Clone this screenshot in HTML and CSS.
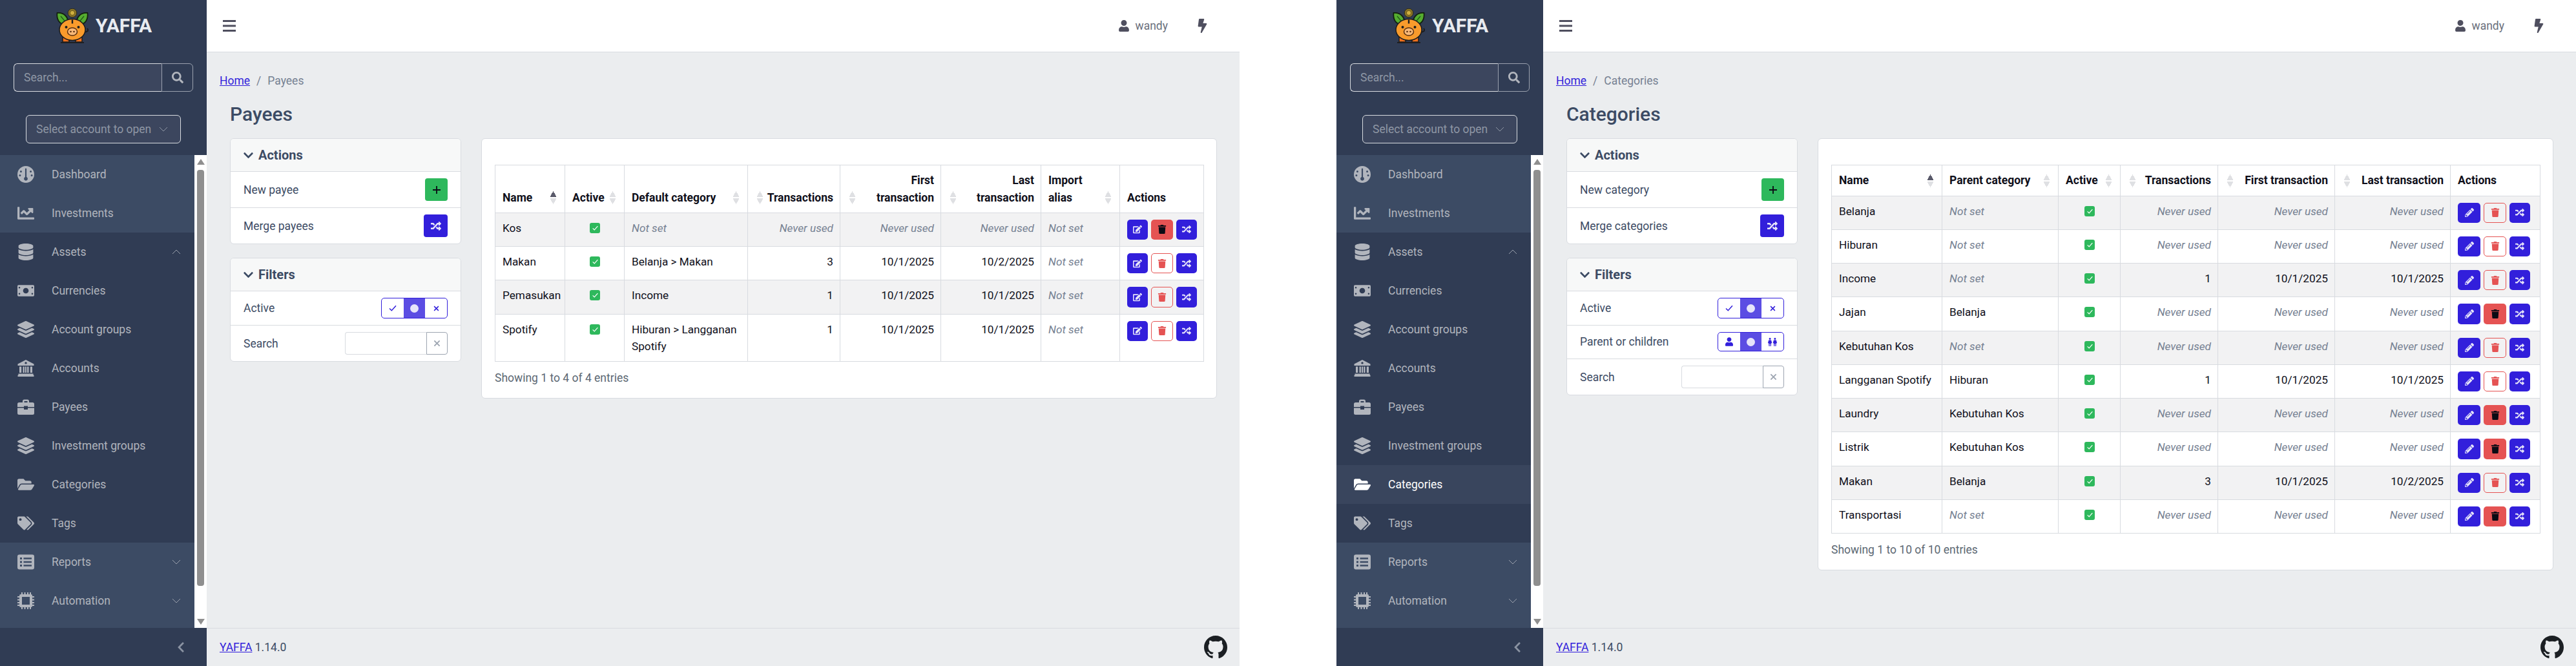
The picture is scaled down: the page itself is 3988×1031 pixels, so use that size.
FILE: index.html
```html
<!DOCTYPE html>
<html lang="en">
<head>
    <meta charset="UTF-8">
    <title>YAFFA</title>
    <link rel="stylesheet" href="styles.css">
</head>
<body>
    <svg class="sprite" xmlns="http://www.w3.org/2000/svg">
        <symbol id="i-gauge" viewBox="0 0 24 24"><path fill-rule="evenodd" d="M12 0a12 12 0 1 0 0 24 12 12 0 0 0 0-24zM5 6.5a1.4 1.4 0 1 0 0 2.8 1.4 1.4 0 0 0 0-2.8zM19 6.5a1.4 1.4 0 1 0 0 2.8 1.4 1.4 0 0 0 0-2.8zM3.6 12a1.4 1.4 0 1 0 0 2.8 1.4 1.4 0 0 0 0-2.8zM20.4 12a1.4 1.4 0 1 0 0 2.8 1.4 1.4 0 0 0 0-2.8zM11 3.5v12.2a2.7 2.7 0 1 0 2 0V3.5z"/></symbol>
        <symbol id="i-chart" viewBox="0 0 512 512"><path d="M496 384H64V80c0-8.84-7.16-16-16-16H16C7.16 64 0 71.16 0 80v336c0 17.67 14.33 32 32 32h464c8.84 0 16-7.16 16-16v-32c0-8.84-7.16-16-16-16zM464 96H345.94c-21.38 0-32.09 25.85-16.97 40.97l32.4 32.4L288 242.75l-73.37-73.37c-12.5-12.5-32.76-12.5-45.25 0l-68.69 68.69c-6.25 6.25-6.25 16.38 0 22.63l22.62 22.62c6.25 6.25 16.38 6.25 22.63 0L192 237.25l73.37 73.37c12.5 12.5 32.76 12.5 45.25 0l96-96 32.4 32.4c15.12 15.12 40.97 4.41 40.97-16.97V112c.01-8.84-7.15-16-16-16z"/></symbol>
        <symbol id="i-database" viewBox="0 0 448 512"><path d="M448 73.143v45.714C448 159.143 347.667 192 224 192S0 159.143 0 118.857V73.143C0 32.857 100.333 0 224 0s224 32.857 224 73.143zM448 176v102.857C448 319.143 347.667 352 224 352S0 319.143 0 278.857V176c48.125 33.143 136.208 48.572 224 48.572S399.874 209.143 448 176zm0 160v102.857C448 479.143 347.667 512 224 512S0 479.143 0 438.857V336c48.125 33.143 136.208 48.572 224 48.572S399.874 369.143 448 336z"/></symbol>
        <symbol id="i-money" viewBox="0 0 30 20"><path fill-rule="evenodd" d="M2 0h26a2 2 0 0 1 2 2v16a2 2 0 0 1-2 2H2a2 2 0 0 1-2-2V2a2 2 0 0 1 2-2zM15 5a5 5 0 1 0 0 10 5 5 0 0 0 0-10zM3.500 3a1 1 0 0 0 0 3 1 1 0 0 0 0-3zM26.500 3a1 1 0 0 0 0 3 1 1 0 0 0 0-3zM3.500 14a1 1 0 0 0 0 3 1 1 0 0 0 0-3zM26.500 14a1 1 0 0 0 0 3 1 1 0 0 0 0-3z"/></symbol>
        <symbol id="i-layers" viewBox="0 0 512 512"><path d="M12.410 148.020l232.940 105.670c6.800 3.090 14.490 3.090 21.290 0l232.940-105.670c16.550-7.510 16.550-32.520 0-40.030L266.650 2.310a25.607 25.607 0 0 0-21.290 0L12.410 107.980c-16.550 7.510-16.550 32.530 0 40.040zm487.180 88.280l-58.090-26.330-161.640 73.270c-7.560 3.430-15.590 5.170-23.860 5.170s-16.290-1.740-23.860-5.170L70.510 209.970l-58.100 26.330c-16.550 7.500-16.550 32.500 0 40l232.940 105.590c6.800 3.080 14.490 3.080 21.290 0L499.590 276.300c16.550-7.500 16.550-32.500 0-40zm0 127.800l-57.870-26.230-161.860 73.370c-7.560 3.430-15.590 5.170-23.860 5.170s-16.290-1.740-23.860-5.170L70.290 337.870 12.410 364.100c-16.550 7.500-16.550 32.500 0 40l232.940 105.590c6.800 3.080 14.490 3.080 21.290 0L499.590 404.100c16.550-7.500 16.550-32.500 0-40z"/></symbol>
        <symbol id="i-bank" viewBox="0 0 26 26"><path fill-rule="evenodd" d="M13 0l12.500 6.500V9H.5V6.500zM13 3.200a1.700 1.700 0 1 0 0 3.400 1.700 1.700 0 0 0 0-3.400zM3 10.500h3.200V20H3zM8.500 10.500h2.400V20H8.500zM12 10.500h2V20h-2zM15.100 10.500h2.400V20h-2.400zM19.800 10.500H23V20h-3.200zM1.500 21.500h23V23l1 1v2H.5v-2l1-1z"/></symbol>
        <symbol id="i-case" viewBox="0 0 26 24"><path fill-rule="evenodd" d="M8 5V3a2.500 2.500 0 0 1 2.500-2.500h5A2.500 2.500 0 0 1 18 3v2h5.500A2.500 2.500 0 0 1 26 7.500V12H16v-1.500h-6V12H0V7.500A2.500 2.500 0 0 1 2.500 5zM10.500 3v2h5V3zM0 13.500h10V16h6v-2.500h10v8A2.500 2.500 0 0 1 23.500 24h-21A2.500 2.500 0 0 1 0 21.500z"/></symbol>
        <symbol id="i-folder" viewBox="0 0 576 512"><path d="M572.694 292.093L500.27 416.248A63.997 63.997 0 0 1 444.989 448H45.025c-18.523 0-30.064-20.093-20.731-36.093l72.424-124.155A64 64 0 0 1 152 256h399.964c18.523 0 30.064 20.093 20.73 36.093zM152 224h328v-48c0-26.51-21.49-48-48-48H272l-64-64H48C21.49 64 0 85.49 0 112v278.046l69.077-118.418C86.214 242.25 117.989 224 152 224z"/></symbol>
        <symbol id="i-tags" viewBox="0 0 640 512"><path d="M497.941 225.941L286.059 14.059A48 48 0 0 0 252.118 0H48C21.490 0 0 21.490 0 48v204.118a48 48 0 0 0 14.059 33.941l211.882 211.882c18.744 18.745 49.136 18.746 67.882 0l204.118-204.118c18.745-18.745 18.745-49.137 0-67.882zM112 160c-26.510 0-48-21.490-48-48s21.490-48 48-48 48 21.490 48 48-21.490 48-48 48zm513.941 133.823L421.823 497.941c-18.745 18.745-49.137 18.745-67.882 0l-.36-.36L527.640 323.522c16.999-16.999 26.360-39.600 26.360-63.640s-9.362-46.641-26.360-63.640L331.397 0h48.721a48 48 0 0 1 33.941 14.059l211.882 211.882c18.745 18.745 18.745 49.137 0 67.882z"/></symbol>
        <symbol id="i-list" viewBox="0 0 26 23"><path fill-rule="evenodd" d="M3 0h20a3 3 0 0 1 3 3v17a3 3 0 0 1-3 3H3a3 3 0 0 1-3-3V3a3 3 0 0 1 3-3zM4 4.500v3h3v-3zM9.500 4.800v2.400H22V4.800zM4 10v3h3v-3zM9.500 10.300v2.400H22v-2.400zM4 15.500v3h3v-3zM9.500 15.800v2.400H22v-2.400z"/></symbol>
        <symbol id="i-chip" viewBox="0 0 26 26"><path fill-rule="evenodd" d="M5 3h16a2 2 0 0 1 2 2v16a2 2 0 0 1-2 2H5a2 2 0 0 1-2-2V5a2 2 0 0 1 2-2zM7 7v12h12V7zM6 0h2v3H6zM10.500 0h2v3h-2zM15 0h2v3h-2zM19 0h2v3h-2zM6 23h2v3H6zM10.500 23h2v3h-2zM15 23h2v3h-2zM19 23h2v3h-2zM0 6h3v2H0zM0 10.500h3v2H0zM0 15h3v2H0zM0 19h3v2H0zM23 6h3v2h-3zM23 10.500h3v2h-3zM23 15h3v2h-3zM23 19h3v2h-3z"/></symbol>
        <symbol id="i-search" viewBox="0 0 512 512"><path d="M505 442.700L405.300 343c-4.500-4.500-10.600-7-17-7H372c27.600-35.300 44-79.700 44-128C416 93.100 322.900 0 208 0S0 93.100 0 208s93.100 208 208 208c48.300 0 92.700-16.400 128-44v16.300c0 6.400 2.500 12.500 7 17l99.700 99.700c9.400 9.400 24.600 9.400 33.900 0l28.300-28.300c9.400-9.400 9.400-24.600.1-34zM208 336c-70.700 0-128-57.200-128-128 0-70.700 57.200-128 128-128 70.700 0 128 57.200 128 128 0 70.700-57.200 128-128 128z"/></symbol>
        <symbol id="i-user" viewBox="0 0 448 512"><path d="M224 256c70.700 0 128-57.300 128-128S294.700 0 224 0 96 57.300 96 128s57.300 128 128 128zm89.600 32h-16.700c-22.200 10.200-46.900 16-72.900 16s-50.600-5.800-72.900-16h-16.700C60.200 288 0 348.200 0 422.400V464c0 26.500 21.500 48 48 48h352c26.500 0 48-21.500 48-48v-41.600c0-74.200-60.200-134.400-134.400-134.400z"/></symbol>
        <symbol id="i-bolt" viewBox="0 0 320 512"><path d="M296 160H180.600l42.600-129.800C227.200 15 215.700 0 200 0H56C44 0 33.800 8.900 32.200 20.800l-32 240C-1.700 275.200 9.500 288 24 288h118.700L96.600 482.500c-3.600 15.200 8 29.500 23.300 29.500 8.400 0 16.400-4.400 20.800-12l176-304c9.300-15.900-2.200-36-20.700-36z"/></symbol>
        <symbol id="i-bars" viewBox="0 0 20 18"><path d="M0 0h20v3H0zM0 7.500h20v3H0zM0 15h20v3H0z"/></symbol>
        <symbol id="i-back" viewBox="0 0 320 512"><path d="M34.520 239.030L228.870 44.690c9.370-9.370 24.570-9.370 33.940 0l22.670 22.670c9.360 9.360 9.370 24.520.04 33.900L131.490 256l154.020 154.750c9.340 9.380 9.320 24.540-.04 33.900l-22.670 22.670c-9.370 9.370-24.570 9.370-33.940 0L34.520 272.970c-9.370-9.370-9.370-24.570 0-33.940z"/></symbol>
        <symbol id="i-down" viewBox="0 0 448 512"><path d="M207.029 381.476L12.686 187.132c-9.373-9.373-9.373-24.569 0-33.941l22.667-22.667c9.357-9.357 24.522-9.375 33.901-.04L224 284.505l154.745-154.021c9.379-9.335 24.544-9.317 33.901.04l22.667 22.667c9.373 9.373 9.373 24.569 0 33.941L240.971 381.476c-9.373 9.372-24.569 9.372-33.942 0z"/></symbol>
        <symbol id="i-thin-down" viewBox="0 0 14 8"><path d="M1 1l6 6 6-6" fill="none" stroke="currentColor" stroke-width="1"/></symbol>
        <symbol id="i-thin-up" viewBox="0 0 14 8"><path d="M1 7l6-6 6 6" fill="none" stroke="currentColor" stroke-width="1"/></symbol>
        <symbol id="i-plus" viewBox="0 0 12 12"><path d="M5.100 0h1.800v5.100H12v1.800H6.900V12H5.100V6.900H0V5.100h5.100z"/></symbol>
        <symbol id="i-shuffle" viewBox="0 0 512 512"><path d="M504.971 359.029c9.373 9.373 9.373 24.569 0 33.941l-80 79.984c-15.010 15.010-40.971 4.490-40.971-16.971V416h-58.785a12.004 12.004 0 0 1-8.773-3.812l-70.556-75.596 53.333-57.143L352 336h32v-39.981c0-21.438 25.943-31.998 40.971-16.971l80 79.981zM12 176h84l52.781 56.551 53.333-57.143-70.556-75.596A11.999 11.999 0 0 0 122.785 96H12c-6.627 0-12 5.373-12 12v56c0 6.627 5.373 12 12 12zm372 0v39.984c0 21.460 25.961 31.980 40.971 16.971l80-79.984c9.373-9.373 9.373-24.569 0-33.941l-80-79.981C409.943 24.021 384 34.582 384 56.019V96h-58.785a12.004 12.004 0 0 0-8.773 3.812L96 336H12c-6.627 0-12 5.373-12 12v56c0 6.627 5.373 12 12 12h110.785c3.326 0 6.503-1.381 8.773-3.812L352 176h32z"/></symbol>
        <symbol id="i-edit" viewBox="0 0 576 512"><path d="M402.600 83.200l90.200 90.200c3.800 3.800 3.800 10 0 13.800L274.400 405.600l-92.800 10.300c-12.400 1.400-22.900-9.100-21.500-21.500l10.300-92.800L388.800 83.200c3.800-3.800 10-3.800 13.800 0zm162-22.900l-48.800-48.800c-15.200-15.200-39.900-15.200-55.200 0l-35.400 35.400c-3.800 3.800-3.800 10 0 13.800l90.200 90.200c3.800 3.800 10 3.800 13.800 0l35.400-35.400c15.200-15.300 15.200-40 0-55.200zM384 346.200V448H64V128h229.800c3.200 0 6.200-1.300 8.500-3.500l40-40c7.600-7.600 2.200-20.500-8.500-20.500H48C21.500 64 0 85.500 0 112v352c0 26.500 21.500 48 48 48h352c26.500 0 48-21.500 48-48V306.200c0-10.700-12.900-16-20.500-8.500l-40 40c-2.200 2.300-3.500 5.300-3.500 8.500z"/></symbol>
        <symbol id="i-pencil" viewBox="0 0 512 512"><path d="M497.900 142.100l-46.100 46.100c-4.700 4.700-12.300 4.700-17 0l-111-111c-4.700-4.700-4.700-12.300 0-17l46.100-46.100c18.700-18.700 49.100-18.700 67.900 0l60.100 60.100c18.800 18.700 18.800 49.100 0 67.900zM284.200 99.800L21.600 362.400.4 483.900c-2.900 16.400 11.400 30.600 27.800 27.800l121.500-21.300 262.600-262.600c4.700-4.700 4.700-12.300 0-17l-111-111c-4.800-4.700-12.400-4.700-17.100 0zM124.100 339.900c-5.500-5.500-5.500-14.300 0-19.800l154-154c5.500-5.500 14.300-5.500 19.800 0s5.500 14.300 0 19.800l-154 154c-5.500 5.500-14.300 5.500-19.800 0zM88 424h48v36.300l-64.500 11.300-31.100-31.100L51.700 376H88v48z"/></symbol>
        <symbol id="i-trash" viewBox="0 0 448 512"><path d="M432 32H312l-9.400-18.700A24 24 0 0 0 281.100 0H166.800a23.720 23.720 0 0 0-21.400 13.300L136 32H16A16 16 0 0 0 0 48v32a16 16 0 0 0 16 16h416a16 16 0 0 0 16-16V48a16 16 0 0 0-16-16zM53.200 467a48 48 0 0 0 47.900 45h245.800a48 48 0 0 0 47.900-45L416 128H32z"/></symbol>
        <symbol id="i-check" viewBox="0 0 14 12"><path d="M1 6.500l4 4 8-9" fill="none" stroke="currentColor" stroke-width="1.800"/></symbol>
        <symbol id="i-times" viewBox="0 0 12 12"><path d="M1.500 1.500l9 9M10.500 1.500l-9 9" fill="none" stroke="currentColor" stroke-width="2"/></symbol>
        <symbol id="i-kids" viewBox="0 0 24 20"><path d="M6 0a2.300 2.300 0 1 1 0 4.600A2.300 2.300 0 0 1 6 0zM18 0a2.300 2.300 0 1 1 0 4.600A2.300 2.300 0 0 1 18 0zM3 5.500h6l2 7H9l-.5 7.500H6.800v-6H5.200v6H3.500L3 12.500H1zM15 5.500h6l2 7h-2l-.5 7.500h-1.700v-6h-1.600v6h-1.700l-.5-7.500h-2z"/></symbol>
        <symbol id="i-github" viewBox="0 0 16 16"><path d="M8 0C3.580 0 0 3.580 0 8c0 3.540 2.290 6.530 5.470 7.590.4.070.55-.17.55-.38 0-.19-.01-.82-.01-1.490-2.010.37-2.530-.49-2.690-.94-.09-.23-.48-.94-.82-1.130-.28-.15-.68-.52-.01-.53.63-.01 1.080.58 1.230.82.72 1.210 1.870.87 2.330.66.070-.52.280-.87.510-1.070-1.780-.2-3.640-.89-3.640-3.950 0-.87.310-1.590.82-2.150-.08-.2-.36-1.020.08-2.120 0 0 .67-.21 2.200.82.640-.18 1.320-.27 2-.27.680 0 1.360.09 2 .27 1.530-1.040 2.200-.82 2.200-.82.440 1.100.16 1.920.08 2.120.51.56.82 1.270.82 2.150 0 3.070-1.870 3.750-3.650 3.950.29.25.54.73.54 1.480 0 1.070-.01 1.930-.01 2.200 0 .21.15.46.55.38A8.013 8.013 0 0016 8c0-4.420-3.580-8-8-8z"/></symbol>
        <symbol id="i-logo" viewBox="0 0 50 54">
            <circle cx="25" cy="7" r="6.800" fill="#8a7424" stroke="#2a2a1c"/>
            <circle cx="25" cy="7" r="3.600" fill="#d0b040" stroke="#6a5a1c"/>
            <path d="M1.500 7C11 6 19 12 19 25 8 27 0 20 1.500 7z" fill="#55ad30" stroke="#13200f" stroke-width="1.800"/>
            <path d="M48.500 7C39 6 31 12 31 25c11 2 19-5 17.500-18z" fill="#55ad30" stroke="#13200f" stroke-width="1.800"/>
            <path d="M7 12l9 11M43 12l-9 11" stroke="#1e5a16" stroke-width="1.200" fill="none"/>
            <path d="M45 37l5-3-2-3" fill="none" stroke="#1d1d1d" stroke-width="2"/>
            <rect x="10" y="42" width="10" height="10" fill="#f0701c" stroke="#1d1d1d" stroke-width="1.500"/>
            <rect x="30" y="42" width="10" height="10" fill="#f0701c" stroke="#1d1d1d" stroke-width="1.500"/>
            <ellipse cx="25" cy="33" rx="20" ry="16.500" fill="#f99b2c" stroke="#1d1d1d" stroke-width="1.500"/>
            <rect x="23.800" y="17.500" width="2.400" height="6" fill="#1d1d1d"/>
            <circle cx="15.500" cy="29" r="2" fill="#1d1d1d"/>
            <circle cx="34.500" cy="29" r="2" fill="#1d1d1d"/>
            <ellipse cx="25" cy="36" rx="7.500" ry="6" fill="#f8b878" stroke="#5a3010" stroke-width="1.500"/>
            <circle cx="22.500" cy="36" r="1.300" fill="#5a3010"/>
            <circle cx="27.500" cy="36" r="1.300" fill="#5a3010"/>
            <rect x="7" y="52" width="36" height="1.800" fill="#1d1d1d"/>
        </symbol>
    </svg>

    <div class="pane">
        <aside class="sidebar">
            <div class="brand">
                <svg class="brand-logo"><use href="#i-logo"/></svg>
                <span class="brand-name">YAFFA</span>
            </div>
            <div class="side-search">
                <input class="side-input" type="text" placeholder="Search...">
                <span class="side-btn"><svg class="ico-search"><use href="#i-search"/></svg></span>
            </div>
            <div class="acct-select">
                <span>Select account to open</span>
                <svg class="ico-thin"><use href="#i-thin-down"/></svg>
            </div>
            <div class="nav-wrap">
                <nav class="nav">
                    <a class="nav-item"><svg class="ico-nav"><use href="#i-gauge"/></svg>Dashboard</a>
                    <a class="nav-item"><svg class="ico-nav"><use href="#i-chart"/></svg>Investments</a>
                    <div class="nav-group">
                        <a class="nav-item"><svg class="ico-nav"><use href="#i-database"/></svg>Assets<svg class="ico-thin nav-arrow"><use href="#i-thin-up"/></svg></a>
                        <a class="nav-item"><svg class="ico-nav"><use href="#i-money"/></svg>Currencies</a>
                        <a class="nav-item"><svg class="ico-nav"><use href="#i-layers"/></svg>Account groups</a>
                        <a class="nav-item"><svg class="ico-nav"><use href="#i-bank"/></svg>Accounts</a>
                        <a class="nav-item"><svg class="ico-nav"><use href="#i-case"/></svg>Payees</a>
                        <a class="nav-item"><svg class="ico-nav"><use href="#i-layers"/></svg>Investment groups</a>
                        <a class="nav-item"><svg class="ico-nav"><use href="#i-folder"/></svg>Categories</a>
                        <a class="nav-item"><svg class="ico-nav"><use href="#i-tags"/></svg>Tags</a>
                    </div>
                    <a class="nav-item"><svg class="ico-nav"><use href="#i-list"/></svg>Reports<svg class="ico-thin nav-arrow"><use href="#i-thin-down"/></svg></a>
                    <a class="nav-item"><svg class="ico-nav"><use href="#i-chip"/></svg>Automation<svg class="ico-thin nav-arrow"><use href="#i-thin-down"/></svg></a>
                </nav>
                <div class="scrollbar">
                    <span class="sb-up"></span>
                    <span class="sb-thumb"></span>
                    <span class="sb-down"></span>
                </div>
            </div>
            <div class="side-foot"><svg class="ico-back"><use href="#i-back"/></svg></div>
        </aside>

        <div class="wrapper">
            <header class="topbar">
                <svg class="ico-bars"><use href="#i-bars"/></svg>
                <div class="top-right">
                    <svg class="ico-user"><use href="#i-user"/></svg>
                    <span class="top-user">wandy</span>
                    <svg class="ico-bolt"><use href="#i-bolt"/></svg>
                </div>
            </header>
            <main class="main">
                <div class="crumbs"><a class="link">Home</a><span class="crumb-sep">/</span><span>Payees</span></div>
                <h1 class="title">Payees</h1>
                <div class="columns">
                    <div class="left-col">
                        <section class="box">
                            <div class="box-head"><svg class="ico-head"><use href="#i-down"/></svg>Actions</div>
                            <div class="box-row">New payee<span class="btn-act btn-green"><svg class="ico-plus"><use href="#i-plus"/></svg></span></div>
                            <div class="box-row">Merge payees<span class="btn-act btn-blue wide"><svg class="ico-btn"><use href="#i-shuffle"/></svg></span></div>
                        </section>
                        <section class="box">
                            <div class="box-head"><svg class="ico-head"><use href="#i-down"/></svg>Filters</div>
                            <div class="box-row">Active
                                <div class="toggle">
                                    <span class="tog"><svg class="ico-check"><use href="#i-check"/></svg></span>
                                    <span class="tog on"><i class="dot"></i></span>
                                    <span class="tog"><svg class="ico-times"><use href="#i-times"/></svg></span>
                                </div>
                            </div>
                            <div class="box-row">Search
                                <div class="filter-search">
                                    <input class="filter-input" type="text">
                                    <span class="filter-clear"><svg class="ico-clear"><use href="#i-times"/></svg></span>
                                </div>
                            </div>
                        </section>
                    </div>
                    <section class="box table-box">
                        <table class="grid">
                            <colgroup><col class="w108"><col class="w92"><col class="w191"><col class="w143"><col class="w156"><col class="w155"><col class="w122"><col class="w130"></colgroup>
                            <thead>
                                <tr>
                                    <th><div class="th-in"><span>Name</span><span class="sort asc"></span></div></th>
                                    <th><div class="th-in"><span>Active</span><span class="sort"></span></div></th>
                                    <th><div class="th-in"><span>Default category</span><span class="sort"></span></div></th>
                                    <th><div class="th-in"><span class="sort"></span><span>Transactions</span></div></th>
                                    <th><div class="th-in"><span class="sort"></span><span class="right">First<br>transaction</span></div></th>
                                    <th><div class="th-in"><span class="sort"></span><span class="right">Last<br>transaction</span></div></th>
                                    <th><div class="th-in"><span>Import<br>alias</span><span class="sort"></span></div></th>
                                    <th>Actions</th>
                                </tr>
                            </thead>
                            <tbody>
                                <tr>
                                    <td>Kos</td><td class="center"><span class="tick"><svg class="ico-tick"><use href="#i-check"/></svg></span></td><td class="muted">Not set</td><td class="right muted">Never used</td><td class="right muted">Never used</td><td class="right muted">Never used</td><td class="muted">Not set</td>
                                    <td><div class="acts"><span class="btn-row btn-blue n32"><svg class="ico-row"><use href="#i-edit"/></svg></span><span class="btn-row btn-red"><svg class="ico-row"><use href="#i-trash"/></svg></span><span class="btn-row btn-blue n32"><svg class="ico-row"><use href="#i-shuffle"/></svg></span></div></td>
                                </tr>
                                <tr>
                                    <td>Makan</td><td class="center"><span class="tick"><svg class="ico-tick"><use href="#i-check"/></svg></span></td><td>Belanja &gt; Makan</td><td class="right">3</td><td class="right">10/1/2025</td><td class="right">10/2/2025</td><td class="muted">Not set</td>
                                    <td><div class="acts"><span class="btn-row btn-blue n32"><svg class="ico-row"><use href="#i-edit"/></svg></span><span class="btn-row btn-line"><svg class="ico-row"><use href="#i-trash"/></svg></span><span class="btn-row btn-blue n32"><svg class="ico-row"><use href="#i-shuffle"/></svg></span></div></td>
                                </tr>
                                <tr>
                                    <td>Pemasukan</td><td class="center"><span class="tick"><svg class="ico-tick"><use href="#i-check"/></svg></span></td><td>Income</td><td class="right">1</td><td class="right">10/1/2025</td><td class="right">10/1/2025</td><td class="muted">Not set</td>
                                    <td><div class="acts"><span class="btn-row btn-blue n32"><svg class="ico-row"><use href="#i-edit"/></svg></span><span class="btn-row btn-line"><svg class="ico-row"><use href="#i-trash"/></svg></span><span class="btn-row btn-blue n32"><svg class="ico-row"><use href="#i-shuffle"/></svg></span></div></td>
                                </tr>
                                <tr>
                                    <td>Spotify</td><td class="center"><span class="tick"><svg class="ico-tick"><use href="#i-check"/></svg></span></td><td>Hiburan &gt; Langganan Spotify</td><td class="right">1</td><td class="right">10/1/2025</td><td class="right">10/1/2025</td><td class="muted">Not set</td>
                                    <td><div class="acts"><span class="btn-row btn-blue n32"><svg class="ico-row"><use href="#i-edit"/></svg></span><span class="btn-row btn-line"><svg class="ico-row"><use href="#i-trash"/></svg></span><span class="btn-row btn-blue n32"><svg class="ico-row"><use href="#i-shuffle"/></svg></span></div></td>
                                </tr>
                            </tbody>
                        </table>
                        <p class="grid-info">Showing 1 to 4 of 4 entries</p>
                    </section>
                </div>
            </main>
            <footer class="foot">
                <span><a class="link">YAFFA</a> 1.14.0</span>
                <svg class="ico-github"><use href="#i-github"/></svg>
            </footer>
        </div>
    </div>

    <div class="pane">
        <aside class="sidebar">
            <div class="brand">
                <svg class="brand-logo"><use href="#i-logo"/></svg>
                <span class="brand-name">YAFFA</span>
            </div>
            <div class="side-search">
                <input class="side-input" type="text" placeholder="Search...">
                <span class="side-btn"><svg class="ico-search"><use href="#i-search"/></svg></span>
            </div>
            <div class="acct-select">
                <span>Select account to open</span>
                <svg class="ico-thin"><use href="#i-thin-down"/></svg>
            </div>
            <div class="nav-wrap">
                <nav class="nav">
                    <a class="nav-item"><svg class="ico-nav"><use href="#i-gauge"/></svg>Dashboard</a>
                    <a class="nav-item"><svg class="ico-nav"><use href="#i-chart"/></svg>Investments</a>
                    <div class="nav-group">
                        <a class="nav-item"><svg class="ico-nav"><use href="#i-database"/></svg>Assets<svg class="ico-thin nav-arrow"><use href="#i-thin-up"/></svg></a>
                        <a class="nav-item"><svg class="ico-nav"><use href="#i-money"/></svg>Currencies</a>
                        <a class="nav-item"><svg class="ico-nav"><use href="#i-layers"/></svg>Account groups</a>
                        <a class="nav-item"><svg class="ico-nav"><use href="#i-bank"/></svg>Accounts</a>
                        <a class="nav-item"><svg class="ico-nav"><use href="#i-case"/></svg>Payees</a>
                        <a class="nav-item"><svg class="ico-nav"><use href="#i-layers"/></svg>Investment groups</a>
                        <a class="nav-item current"><svg class="ico-nav"><use href="#i-folder"/></svg>Categories</a>
                        <a class="nav-item"><svg class="ico-nav"><use href="#i-tags"/></svg>Tags</a>
                    </div>
                    <a class="nav-item"><svg class="ico-nav"><use href="#i-list"/></svg>Reports<svg class="ico-thin nav-arrow"><use href="#i-thin-down"/></svg></a>
                    <a class="nav-item"><svg class="ico-nav"><use href="#i-chip"/></svg>Automation<svg class="ico-thin nav-arrow"><use href="#i-thin-down"/></svg></a>
                </nav>
                <div class="scrollbar">
                    <span class="sb-up"></span>
                    <span class="sb-thumb"></span>
                    <span class="sb-down"></span>
                </div>
            </div>
            <div class="side-foot"><svg class="ico-back"><use href="#i-back"/></svg></div>
        </aside>

        <div class="wrapper">
            <header class="topbar">
                <svg class="ico-bars"><use href="#i-bars"/></svg>
                <div class="top-right">
                    <svg class="ico-user"><use href="#i-user"/></svg>
                    <span class="top-user">wandy</span>
                    <svg class="ico-bolt"><use href="#i-bolt"/></svg>
                </div>
            </header>
            <main class="main">
                <div class="crumbs"><a class="link">Home</a><span class="crumb-sep">/</span><span>Categories</span></div>
                <h1 class="title">Categories</h1>
                <div class="columns">
                    <div class="left-col">
                        <section class="box">
                            <div class="box-head"><svg class="ico-head"><use href="#i-down"/></svg>Actions</div>
                            <div class="box-row">New category<span class="btn-act btn-green"><svg class="ico-plus"><use href="#i-plus"/></svg></span></div>
                            <div class="box-row">Merge categories<span class="btn-act btn-blue wide"><svg class="ico-btn"><use href="#i-shuffle"/></svg></span></div>
                        </section>
                        <section class="box">
                            <div class="box-head"><svg class="ico-head"><use href="#i-down"/></svg>Filters</div>
                            <div class="box-row">Active
                                <div class="toggle">
                                    <span class="tog"><svg class="ico-check"><use href="#i-check"/></svg></span>
                                    <span class="tog on"><i class="dot"></i></span>
                                    <span class="tog"><svg class="ico-times"><use href="#i-times"/></svg></span>
                                </div>
                            </div>
                            <div class="box-row slim">Parent or children
                                <div class="toggle short">
                                    <span class="tog"><svg class="ico-pers"><use href="#i-user"/></svg></span>
                                    <span class="tog on"><i class="dot"></i></span>
                                    <span class="tog"><svg class="ico-kids"><use href="#i-kids"/></svg></span>
                                </div>
                            </div>
                            <div class="box-row">Search
                                <div class="filter-search">
                                    <input class="filter-input" type="text">
                                    <span class="filter-clear"><svg class="ico-clear"><use href="#i-times"/></svg></span>
                                </div>
                            </div>
                        </section>
                    </div>
                    <section class="box table-box">
                        <table class="grid">
                            <colgroup><col class="w171"><col class="w180"><col class="w96"><col class="w151"><col class="w181"><col class="w179"><col class="w139"></colgroup>
                            <thead>
                                <tr>
                                    <th><div class="th-in"><span>Name</span><span class="sort asc"></span></div></th>
                                    <th><div class="th-in"><span>Parent category</span><span class="sort"></span></div></th>
                                    <th><div class="th-in"><span>Active</span><span class="sort"></span></div></th>
                                    <th><div class="th-in"><span class="sort"></span><span>Transactions</span></div></th>
                                    <th><div class="th-in"><span class="sort"></span><span>First transaction</span></div></th>
                                    <th><div class="th-in"><span class="sort"></span><span>Last transaction</span></div></th>
                                    <th>Actions</th>
                                </tr>
                            </thead>
                            <tbody>
                                <tr>
                                    <td>Belanja</td><td class="muted">Not set</td><td class="center"><span class="tick"><svg class="ico-tick"><use href="#i-check"/></svg></span></td><td class="right muted">Never used</td><td class="right muted">Never used</td><td class="right muted">Never used</td>
                                    <td><div class="acts"><span class="btn-row btn-blue"><svg class="ico-row"><use href="#i-pencil"/></svg></span><span class="btn-row btn-line"><svg class="ico-row"><use href="#i-trash"/></svg></span><span class="btn-row btn-blue n32"><svg class="ico-row"><use href="#i-shuffle"/></svg></span></div></td>
                                </tr>
                                <tr>
                                    <td>Hiburan</td><td class="muted">Not set</td><td class="center"><span class="tick"><svg class="ico-tick"><use href="#i-check"/></svg></span></td><td class="right muted">Never used</td><td class="right muted">Never used</td><td class="right muted">Never used</td>
                                    <td><div class="acts"><span class="btn-row btn-blue"><svg class="ico-row"><use href="#i-pencil"/></svg></span><span class="btn-row btn-line"><svg class="ico-row"><use href="#i-trash"/></svg></span><span class="btn-row btn-blue n32"><svg class="ico-row"><use href="#i-shuffle"/></svg></span></div></td>
                                </tr>
                                <tr>
                                    <td>Income</td><td class="muted">Not set</td><td class="center"><span class="tick"><svg class="ico-tick"><use href="#i-check"/></svg></span></td><td class="right">1</td><td class="right">10/1/2025</td><td class="right">10/1/2025</td>
                                    <td><div class="acts"><span class="btn-row btn-blue"><svg class="ico-row"><use href="#i-pencil"/></svg></span><span class="btn-row btn-line"><svg class="ico-row"><use href="#i-trash"/></svg></span><span class="btn-row btn-blue n32"><svg class="ico-row"><use href="#i-shuffle"/></svg></span></div></td>
                                </tr>
                                <tr>
                                    <td>Jajan</td><td>Belanja</td><td class="center"><span class="tick"><svg class="ico-tick"><use href="#i-check"/></svg></span></td><td class="right muted">Never used</td><td class="right muted">Never used</td><td class="right muted">Never used</td>
                                    <td><div class="acts"><span class="btn-row btn-blue"><svg class="ico-row"><use href="#i-pencil"/></svg></span><span class="btn-row btn-red"><svg class="ico-row"><use href="#i-trash"/></svg></span><span class="btn-row btn-blue n32"><svg class="ico-row"><use href="#i-shuffle"/></svg></span></div></td>
                                </tr>
                                <tr>
                                    <td>Kebutuhan Kos</td><td class="muted">Not set</td><td class="center"><span class="tick"><svg class="ico-tick"><use href="#i-check"/></svg></span></td><td class="right muted">Never used</td><td class="right muted">Never used</td><td class="right muted">Never used</td>
                                    <td><div class="acts"><span class="btn-row btn-blue"><svg class="ico-row"><use href="#i-pencil"/></svg></span><span class="btn-row btn-line"><svg class="ico-row"><use href="#i-trash"/></svg></span><span class="btn-row btn-blue n32"><svg class="ico-row"><use href="#i-shuffle"/></svg></span></div></td>
                                </tr>
                                <tr>
                                    <td>Langganan Spotify</td><td>Hiburan</td><td class="center"><span class="tick"><svg class="ico-tick"><use href="#i-check"/></svg></span></td><td class="right">1</td><td class="right">10/1/2025</td><td class="right">10/1/2025</td>
                                    <td><div class="acts"><span class="btn-row btn-blue"><svg class="ico-row"><use href="#i-pencil"/></svg></span><span class="btn-row btn-line"><svg class="ico-row"><use href="#i-trash"/></svg></span><span class="btn-row btn-blue n32"><svg class="ico-row"><use href="#i-shuffle"/></svg></span></div></td>
                                </tr>
                                <tr>
                                    <td>Laundry</td><td>Kebutuhan Kos</td><td class="center"><span class="tick"><svg class="ico-tick"><use href="#i-check"/></svg></span></td><td class="right muted">Never used</td><td class="right muted">Never used</td><td class="right muted">Never used</td>
                                    <td><div class="acts"><span class="btn-row btn-blue"><svg class="ico-row"><use href="#i-pencil"/></svg></span><span class="btn-row btn-red"><svg class="ico-row"><use href="#i-trash"/></svg></span><span class="btn-row btn-blue n32"><svg class="ico-row"><use href="#i-shuffle"/></svg></span></div></td>
                                </tr>
                                <tr>
                                    <td>Listrik</td><td>Kebutuhan Kos</td><td class="center"><span class="tick"><svg class="ico-tick"><use href="#i-check"/></svg></span></td><td class="right muted">Never used</td><td class="right muted">Never used</td><td class="right muted">Never used</td>
                                    <td><div class="acts"><span class="btn-row btn-blue"><svg class="ico-row"><use href="#i-pencil"/></svg></span><span class="btn-row btn-red"><svg class="ico-row"><use href="#i-trash"/></svg></span><span class="btn-row btn-blue n32"><svg class="ico-row"><use href="#i-shuffle"/></svg></span></div></td>
                                </tr>
                                <tr>
                                    <td>Makan</td><td>Belanja</td><td class="center"><span class="tick"><svg class="ico-tick"><use href="#i-check"/></svg></span></td><td class="right">3</td><td class="right">10/1/2025</td><td class="right">10/2/2025</td>
                                    <td><div class="acts"><span class="btn-row btn-blue"><svg class="ico-row"><use href="#i-pencil"/></svg></span><span class="btn-row btn-line"><svg class="ico-row"><use href="#i-trash"/></svg></span><span class="btn-row btn-blue n32"><svg class="ico-row"><use href="#i-shuffle"/></svg></span></div></td>
                                </tr>
                                <tr>
                                    <td>Transportasi</td><td class="muted">Not set</td><td class="center"><span class="tick"><svg class="ico-tick"><use href="#i-check"/></svg></span></td><td class="right muted">Never used</td><td class="right muted">Never used</td><td class="right muted">Never used</td>
                                    <td><div class="acts"><span class="btn-row btn-blue"><svg class="ico-row"><use href="#i-pencil"/></svg></span><span class="btn-row btn-red"><svg class="ico-row"><use href="#i-trash"/></svg></span><span class="btn-row btn-blue n32"><svg class="ico-row"><use href="#i-shuffle"/></svg></span></div></td>
                                </tr>
                            </tbody>
                        </table>
                        <p class="grid-info">Showing 1 to 10 of 10 entries</p>
                    </section>
                </div>
            </main>
            <footer class="foot">
                <span><a class="link">YAFFA</a> 1.14.0</span>
                <svg class="ico-github"><use href="#i-github"/></svg>
            </footer>
        </div>
    </div>
</body>
</html>
```

FILE: styles.css
```css
* {
    box-sizing: border-box;
}
html, body {
    height: 100%;
}
body {
    margin: 0;
    width: 3988px;
    height: 1031px;
    display: flex;
    justify-content: space-between;
    overflow: hidden;
    background: #ffffff;
    font-family: Roboto, "Noto Sans", sans-serif;
    font-size: 17.5px;
    line-height: 26.25px;
    color: #3c4b64;
}
svg {
    fill: currentColor;
    flex: none;
    display: block;
}
.sprite {
    display: none;
}
.pane {
    width: 1919px;
    height: 1031px;
    display: flex;
}

/* sidebar */
.sidebar {
    width: 320px;
    display: flex;
    flex-direction: column;
    background: #303c54;
    color: #b1b5bd;
}
.brand {
    height: 80px;
    display: flex;
    align-items: center;
    padding-left: 87px;
    gap: 11px;
}
.brand-logo {
    width: 50px;
    height: 54px;
}
.brand-name {
    font-size: 30px;
    font-weight: 700;
    color: #e8ebf0;
}
.side-search {
    display: flex;
    height: 44px;
    margin: 18px 21px 0;
}
.side-input {
    width: 229px;
    height: 44px;
    padding: 0 15px;
    border: 1px solid #d8dbe0;
    border-right: 0;
    border-radius: 6px 0 0 6px;
    background: #3c465e;
    font: inherit;
    outline: none;
}
.side-input::placeholder {
    color: #8f97a5;
}
.side-btn {
    flex: 1;
    display: flex;
    align-items: center;
    justify-content: center;
    border: 1px solid #9aa1ae;
    border-radius: 0 6px 6px 0;
    color: #b1b5bd;
}
.ico-search {
    width: 18px;
    height: 18px;
}
.acct-select {
    display: flex;
    align-items: center;
    justify-content: space-between;
    height: 44px;
    margin: 36px 40px 18px;
    padding: 0 19px 0 15px;
    border: 1px solid #d8dbe0;
    border-radius: 6px;
    background: #3c465e;
    color: #8f97a5;
}
.ico-thin {
    width: 14px;
    height: 8px;
}
.nav-wrap {
    flex: 1;
    display: flex;
    min-height: 0;
}
.nav {
    flex: 1;
    background: #3c4b64;
}
.nav-group {
    background: #303c54;
}
.nav-item {
    display: flex;
    align-items: center;
    height: 60px;
    padding: 0 21px 0 27px;
    gap: 27px;
}
.nav-item.current {
    background: #39455d;
    color: #ffffff;
}
.ico-nav {
    width: 26px;
    height: 26px;
}
.nav-arrow {
    margin-left: auto;
    color: #9aa0ac;
}
.scrollbar {
    width: 19px;
    display: flex;
    flex-direction: column;
    align-items: center;
    padding: 6px 0 5px;
    background: #ffffff;
}
.sb-up,
.sb-down {
    width: 0;
    height: 0;
    border-left: 6px solid transparent;
    border-right: 6px solid transparent;
}
.sb-up {
    border-bottom: 9px solid #8f8f8f;
}
.sb-down {
    margin-top: auto;
    border-top: 9px solid #8f8f8f;
}
.sb-thumb {
    width: 11px;
    height: 644px;
    margin-top: 8px;
    border-radius: 4px;
    background: #8f8f8f;
}
.side-foot {
    height: 59px;
    display: flex;
    align-items: center;
    justify-content: flex-end;
    padding-right: 33px;
    color: #8a93a2;
}
.ico-back {
    width: 14px;
    height: 18px;
}

/* top and bottom bars */
.wrapper {
    flex: 1;
    display: flex;
    flex-direction: column;
    min-width: 0;
    background: #ebedef;
}
.topbar {
    height: 81px;
    display: flex;
    align-items: center;
    justify-content: space-between;
    padding: 0 49px 0 25px;
    border-bottom: 1px solid #d8dbe0;
    background: #ffffff;
    color: #4f4f5f;
}
.ico-bars {
    width: 20px;
    height: 18px;
}
.top-right {
    display: flex;
    align-items: center;
}
.ico-user {
    width: 16px;
    height: 18px;
}
.top-user {
    margin: 0 45px 0 10px;
    font-size: 17.5px;
    color: #6a6f7c;
}
.ico-bolt {
    width: 17px;
    height: 22px;
}
.main {
    flex: 1;
    min-height: 0;
    padding: 31px 35px 0 36px;
}
.crumbs {
    margin: 0 0 20px -16px;
    color: #768192;
}
.crumb-sep {
    margin: 0 10px;
}
.link {
    color: #321fdb;
    text-decoration: underline;
}
.title {
    margin: 0 0 19px;
    font-size: 30px;
    line-height: 37px;
    font-weight: 500;
}
.foot {
    height: 59px;
    display: flex;
    align-items: center;
    justify-content: space-between;
    padding: 0 19px 0 20px;
    border-top: 1px solid #d8dbe0;
}
.ico-github {
    width: 36px;
    height: 36px;
    color: #1b1f23;
}

/* cards */
.columns {
    display: flex;
    align-items: flex-start;
    gap: 31px;
}
.left-col {
    width: 358px;
    display: flex;
    flex-direction: column;
    gap: 21px;
}
.box {
    border: 1px solid #d8dbe0;
    border-radius: 6px;
    background: #ffffff;
    overflow: hidden;
}
.box-head {
    display: flex;
    align-items: center;
    gap: 8px;
    height: 51px;
    padding-left: 20px;
    border-bottom: 1px solid #d8dbe0;
    background: #f7f8f8;
    font-size: 20px;
    font-weight: 700;
}
.ico-head {
    width: 15px;
    height: 17px;
}
.box-row {
    display: flex;
    align-items: center;
    justify-content: space-between;
    padding: 10px 20px;
    border-bottom: 1px solid #d8dbe0;
}
.box-row:last-child {
    border-bottom: 0;
}
.box-row.slim {
    padding: 10px 20px 11px;
}
.btn-act {
    width: 35px;
    height: 35px;
    display: flex;
    align-items: center;
    justify-content: center;
    border-radius: 4px;
}
.btn-act.wide {
    width: 37px;
}
.btn-green {
    background: #2eb85c;
    color: #0b0b14;
}
.btn-blue {
    background: #321fdb;
    color: #e6e4fa;
}
.ico-plus {
    width: 12px;
    height: 12px;
}
.ico-btn {
    width: 16px;
    height: 16px;
}
.toggle {
    width: 103px;
    height: 32px;
    display: flex;
    border: 1px solid #321fdb;
    border-radius: 5px;
    overflow: hidden;
    color: #321fdb;
}
.toggle.short {
    height: 30px;
}
.tog {
    flex: 1;
    display: flex;
    align-items: center;
    justify-content: center;
}
.tog.on {
    background: #5b4de3;
}
.dot {
    width: 13px;
    height: 13px;
    border-radius: 50%;
    background: #e6e4fa;
}
.ico-check {
    width: 12px;
    height: 10px;
}
.ico-times {
    width: 9px;
    height: 9px;
}
.ico-pers {
    width: 12px;
    height: 14px;
}
.ico-kids {
    width: 16px;
    height: 13px;
}
.filter-search {
    width: 159px;
    height: 35px;
    display: flex;
}
.filter-input {
    flex: 1;
    min-width: 0;
    border: 1px solid #d8dbe0;
    border-right: 0;
    border-radius: 4px 0 0 4px;
    outline: none;
}
.filter-clear {
    width: 33px;
    display: flex;
    align-items: center;
    justify-content: center;
    border: 1px solid #9da5b1;
    border-radius: 0 4px 4px 0;
    color: #9da5b1;
}
.ico-clear {
    width: 11px;
    height: 11px;
}

/* data table */
.table-box {
    flex: 1;
    min-width: 0;
    padding: 40px 20px 18px;
}
.grid {
    width: 100%;
    table-layout: fixed;
    border-collapse: collapse;
    color: #0f0f1a;
}
.w92 { width: 92px; }
.w96 { width: 96px; }
.w108 { width: 108px; }
.w122 { width: 122px; }
.w130 { width: 130px; }
.w139 { width: 139px; }
.w143 { width: 143px; }
.w151 { width: 151px; }
.w155 { width: 155px; }
.w156 { width: 156px; }
.w171 { width: 171px; }
.w179 { width: 179px; }
.w180 { width: 180px; }
.w181 { width: 181px; }
.w191 { width: 191px; }
.grid th,
.grid td {
    padding: 10px 10px 10px 11px;
    border: 1px solid #d8dbe0;
    vertical-align: top;
    text-align: left;
}
.grid td {
    font-size: 17.2px;
}
.grid th {
    vertical-align: bottom;
    font-weight: 700;
}
.grid tbody tr:nth-child(odd) {
    background: #f2f2f3;
}
.th-in {
    display: flex;
    align-items: flex-end;
    justify-content: space-between;
}
.sort {
    width: 11px;
    height: 26px;
    margin: 0 2px;
    flex: none;
    background:
        conic-gradient(from -30deg at 50% 100%, #dfe0e3 60deg, transparent 0) center 14px / 11px 9px no-repeat,
        conic-gradient(from 150deg at 50% 0, #dfe0e3 60deg, transparent 0) center 3px / 11px 9px no-repeat;
}
.sort.asc {
    background:
        conic-gradient(from -30deg at 50% 100%, #dfe0e3 60deg, transparent 0) center 14px / 11px 9px no-repeat,
        conic-gradient(from 150deg at 50% 0, #5a5a6a 60deg, transparent 0) center 3px / 11px 9px no-repeat;
}
.right {
    text-align: right !important;
}
.center {
    text-align: center !important;
}
.muted {
    font-style: italic;
    color: #768192;
}
.tick {
    width: 16px;
    height: 16px;
    margin: 5px auto 0;
    display: flex;
    align-items: center;
    justify-content: center;
    border-radius: 3px;
    background: #2eb85c;
    color: #ffffff;
}
.ico-tick {
    width: 9px;
    height: 8px;
}
.acts {
    display: flex;
    gap: 5px;
}
.btn-row {
    width: 35px;
    height: 31.25px;
    display: flex;
    align-items: center;
    justify-content: center;
    border-radius: 5px;
}
.btn-row.n32 {
    width: 32px;
}
.btn-red {
    background: #e55353;
    color: #0b0b14;
}
.btn-line {
    border: 1px solid #e55353;
    color: #e55353;
}
.ico-row {
    width: 14px;
    height: 14px;
}
.grid-info {
    margin: 12px 0 0;
    color: #5c6873;
}
```
